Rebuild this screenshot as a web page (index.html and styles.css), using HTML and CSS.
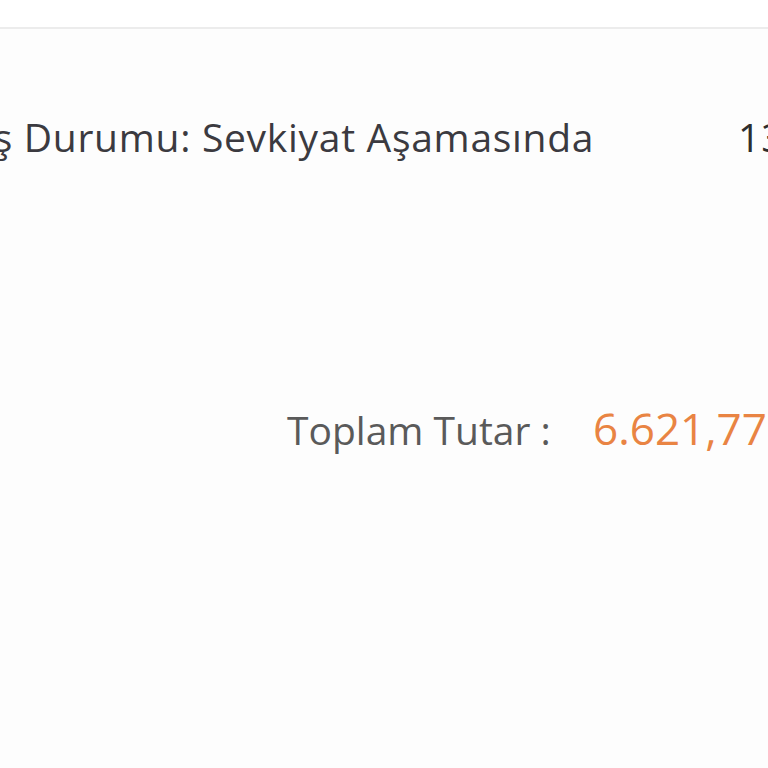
FILE: index.html
```html
<!DOCTYPE html>
<html lang="tr">
<head>
<meta charset="utf-8">
<link rel="stylesheet" href="styles.css">
</head>
<body>
<div class="page">
  <div class="topbar"></div>
  <div class="order-row">
    <span class="status">Sipariş Durumu: Sevkiyat Aşamasında</span>
    <span class="date">13.05.2021</span>
  </div>
  <div class="total-row">
    <span class="total-label">Toplam Tutar :</span>
    <span class="total-value">6.621,77 TL</span>
  </div>
</div>
</body>
</html>
```
FILE: styles.css
```css
html, body {
  margin: 0;
  padding: 0;
  background: #fdfdfd;
  overflow: hidden;
  width: 768px;
  height: 768px;
}
.page {
  font-family: "Open Sans", sans-serif;
  width: 1200px;
  margin-left: -113px;
}
.topbar {
  height: 27px;
  background: #ffffff;
  border-bottom: 2px solid #ececec;
}
.order-row {
  display: flex;
  align-items: baseline;
  padding-top: 88px;
  font-size: 39px;
  line-height: 1;
  color: #3b3a40;
  white-space: nowrap;
}
.status {
  width: 851px;
  letter-spacing: 0.7px;
}
.date {
  color: #2e2e2e;
  letter-spacing: 1px;
}
.total-row {
  display: flex;
  align-items: baseline;
  padding-top: 250px;
  padding-left: 400px;
  line-height: 1;
  white-space: nowrap;
}
.total-label {
  font-size: 39px;
  color: #5a5a5a;
  width: 306px;
}
.total-value {
  font-size: 44px;
  color: #e98443;
  font-weight: 500;
}
```
